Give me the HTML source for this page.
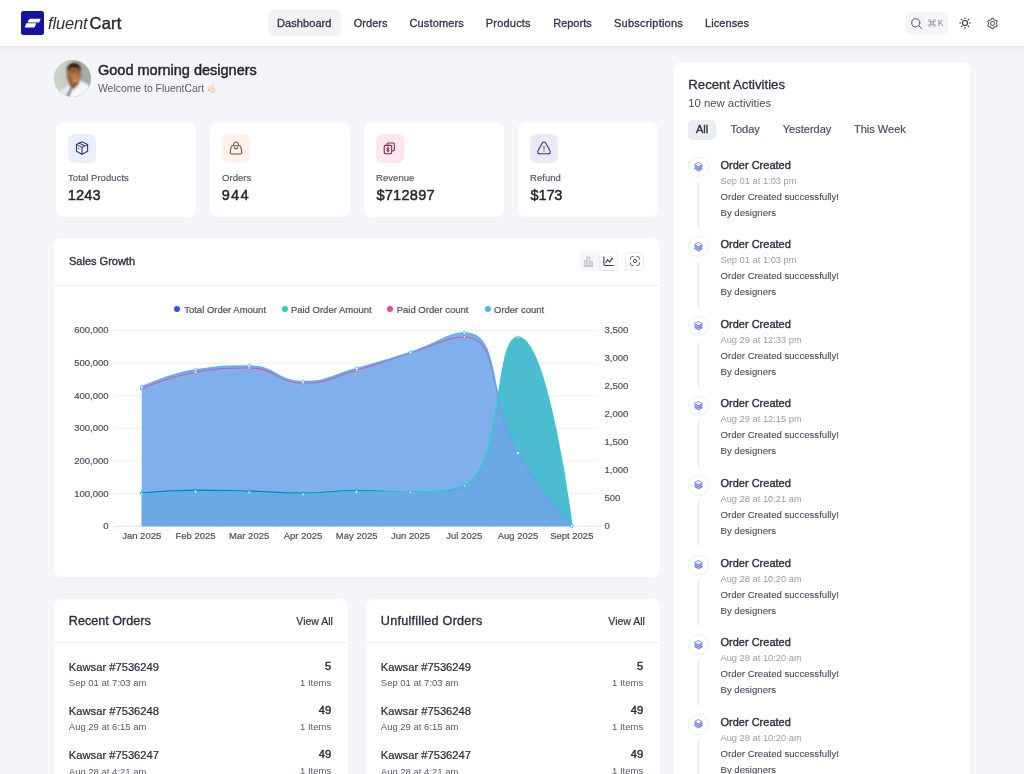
<!DOCTYPE html>
<html>
<head>
<meta charset="utf-8">
<title>FluentCart Dashboard</title>
<style>
*{box-sizing:border-box;margin:0;padding:0}
html,body{width:1024px;height:774px;overflow:hidden}
body{will-change:transform;background:#f4f5f9;font-family:"Liberation Sans",sans-serif;color:#2a2f3f;position:relative;-webkit-font-smoothing:antialiased}
.a{position:absolute;white-space:nowrap}
.m{-webkit-text-stroke:0.3px currentColor}
.sb{-webkit-text-stroke:0.45px currentColor}
.card{position:absolute;background:#fff;border-radius:7px}
/* header */
#hdr{position:absolute;left:0;top:0;width:1024px;height:45.600px;background:#fff;box-shadow:0 1px 2px rgba(20,25,50,.05),0 3px 10px rgba(20,25,50,.035)}
.nav{font-size:11px;line-height:14px;top:16px;color:#2f3446}
.cl{font-size:9.500px;line-height:12px;color:#4b515f;-webkit-text-stroke:0.200px currentColor}
.tab{font-size:11px;line-height:14px;top:122px;color:#474d5b;-webkit-text-stroke:0.180px currentColor}
</style>
</head>
<body>
<!--HEADER-->
<div id="hdr">
  <div class="a" style="left:21px;top:11.3px;width:23.2px;height:23.4px;background:#1414a2;border-radius:2.5px"></div>
  <svg class="a" style="left:21px;top:11px" width="24" height="24" viewBox="0 0 24 24"><path d="M9.600 7.700h9.600c0.300 0 0.500 0.200 0.400 0.500l-1.300 3c-0.100 0.200-0.300 0.300-0.500 0.300H6.700c0.300-2.100 1.300-3.500 2.900-3.800z M5.700 12.300h9c0.300 0 0.500 0.200 0.400 0.500l-1.400 3.300c-0.100 0.200-0.300 0.300-0.500 0.300H4.200c-0.300 0-0.500-0.200-0.400-0.500l1.400-3.300c0.100-0.200 0.300-0.300 0.500-0.300z" fill="#fff"/></svg>
  <div class="a" style="left:48px;top:12.5px;font-size:16.5px;line-height:20px;color:#34343e"><i style="letter-spacing:-0.15px">fluent</i><span class="sb" style="margin-left:2px;letter-spacing:0.25px;color:#2a2a36">Cart</span></div>
  <div class="a" style="left:268px;top:10px;width:73px;height:26px;background:#f1f2f4;border-radius:6px"></div>
  <div class="a nav m" style="left:277px;letter-spacing:0.08px">Dashboard</div>
  <div class="a nav m" style="left:353.8px">Orders</div>
  <div class="a nav m" style="left:409.5px;letter-spacing:0.13px">Customers</div>
  <div class="a nav m" style="left:485.8px;letter-spacing:0.2px">Products</div>
  <div class="a nav m" style="left:553.2px">Reports</div>
  <div class="a nav m" style="left:614px;letter-spacing:0.23px">Subscriptions</div>
  <div class="a nav m" style="left:705px;letter-spacing:0.07px">Licenses</div>
  <div class="a" style="left:905.800px;top:11.500px;width:42.400px;height:23px;background:#f3f5f7;border-radius:6px"></div>
  <svg class="a" style="left:909.500px;top:17px" width="14" height="14" viewBox="0 0 14 14" fill="none" stroke="#555b66" stroke-width="1" stroke-linecap="round"><circle cx="5.800" cy="5.800" r="4.100"/><path d="M8.900 8.900L11.800 11.600"/></svg>
  <div class="a" style="left:928.200px;top:17.800px;font-size:8.600px;line-height:11px;color:#9a9fa9;-webkit-text-stroke:0.250px #9a9fa9"><svg width="8" height="8" viewBox="0 0 8 8" style="vertical-align:-0.900px;margin-right:1.500px" fill="none" stroke="#9a9fa9" stroke-width="0.950"><path d="M2.750 2.750h2.500v2.500h-2.500zM2.750 2.750h-1.100a1.100 1.100 0 1 1 1.100-1.100zM5.250 2.750v-1.100a1.100 1.100 0 1 1 1.100 1.100zM5.250 5.250h1.100a1.100 1.100 0 1 1-1.100 1.100zM2.750 5.250v1.100a1.100 1.100 0 1 1-1.100-1.100z"/></svg>K</div>
  <svg class="a" style="left:958.500px;top:17.100px" width="12" height="12" viewBox="0 0 12 12" fill="none" stroke="#30353f" stroke-width="1.100" stroke-linecap="round"><circle cx="6" cy="6" r="2.550"/><path d="M6 0.800v0.800M6 10.400v0.800M0.800 6h0.800M10.400 6h0.800M2.300 2.300l0.550 0.550M9.150 9.150l0.550 0.550M9.700 2.300l-0.550 0.550M2.850 9.150l-0.550 0.550"/></svg>
  <svg class="a" style="left:985.600px;top:16.700px" width="13" height="13" viewBox="0 0 13 13" fill="none" stroke="#4a505c" stroke-width="1.050" stroke-linejoin="round"><path d="M10.43 6.50L10.50 6.85L10.68 7.24L10.89 7.68L11.07 8.16L11.11 8.65L10.98 9.08L10.67 9.42L10.22 9.62L9.72 9.72L9.23 9.75L8.80 9.79L8.46 9.90L8.20 10.14L7.95 10.48L7.68 10.89L7.34 11.29L6.94 11.57L6.50 11.67L6.06 11.57L5.66 11.29L5.32 10.89L5.05 10.48L4.80 10.14L4.54 9.90L4.20 9.79L3.77 9.75L3.28 9.72L2.78 9.62L2.33 9.42L2.02 9.09L1.89 8.65L1.93 8.16L2.11 7.68L2.32 7.24L2.50 6.85L2.57 6.50L2.50 6.15L2.32 5.76L2.11 5.32L1.93 4.84L1.89 4.35L2.02 3.91L2.33 3.58L2.78 3.38L3.28 3.28L3.77 3.25L4.20 3.21L4.53 3.10L4.80 2.86L5.05 2.52L5.32 2.11L5.66 1.71L6.06 1.43L6.50 1.33L6.94 1.43L7.34 1.71L7.68 2.11L7.95 2.52L8.20 2.86L8.46 3.10L8.80 3.21L9.23 3.25L9.72 3.28L10.22 3.38L10.67 3.58L10.98 3.92L11.11 4.35L11.07 4.84L10.89 5.32L10.68 5.76L10.50 6.15Z"/><circle cx="6.500" cy="6.500" r="1.950"/></svg>
</div>
<!--GREETING-->
<div class="a" style="left:53.900px;top:60px;width:37.300px;height:37.300px;border-radius:50%;overflow:hidden;background:#c3cbc4">
<svg width="37.300" height="37.300" viewBox="0 0 37.300 37.300">
<defs><linearGradient id="avbg" x1="0" y1="0" x2="1" y2="0"><stop offset="0" stop-color="#ccd3cb"/><stop offset="0.420" stop-color="#c4ccc3"/><stop offset="0.680" stop-color="#9fa9a0"/><stop offset="1" stop-color="#a7b1a9"/></linearGradient>
<filter id="avb" x="-10%" y="-10%" width="120%" height="120%"><feGaussianBlur stdDeviation="0.900"/></filter></defs>
<rect width="37.300" height="37.300" fill="url(#avbg)"/>
<g filter="url(#avb)">
<path d="M3 38c0.500-5 3-8 7-9.500l5.500-4 4.500 3.500 6-7.500c3.500 1.500 8.500 3.500 10 7.500l2 10z" fill="#f4f6f9"/>
<path d="M-2 40l6-8 8-4 3 12z" fill="#e4e9ee"/>
<path d="M15 22l1 5 3.500 2.500 6-6-1-5z" fill="#8a5434"/>
<ellipse cx="19.700" cy="14.800" rx="6.900" ry="9.800" fill="#945a36"/>
<ellipse cx="21.500" cy="17.500" rx="3.800" ry="5" fill="#c0824f" opacity="0.800"/>
<path d="M12.800 12c-0.300-5.500 2.500-9 7-9s7.500 3.300 7 9c-0.800-3.300-3-5.200-7-5.200s-6 1.800-7 5.200z" fill="#24140c"/><path d="M13.300 11c0.500-4.500 3-7 6.500-7s6.300 2.500 6.500 7c-1.200-2.500-3.200-3.800-6.500-3.800s-5.300 1.300-6.500 3.800z" fill="#2a170e"/>
<path d="M17.500 19.800c2 1.300 4.500 1.100 6-0.300-0.500 1.700-1.800 2.500-3.200 2.500s-2.500-0.800-2.800-2.200z" fill="#d9a27a"/><ellipse cx="16.300" cy="14.500" rx="1.600" ry="3" fill="#b97a4c" opacity="0.700"/>
<path d="M16 28l2.300 0.800-3.200 8-2.800-0.500z" fill="#4f627a"/>
</g>
</svg></div>
<div class="a sb" style="left:98px;top:60.500px;font-size:14.500px;line-height:18px;color:#22262f">Good morning designers</div>
<div class="a" style="left:98px;top:81.500px;font-size:10.400px;line-height:13px;color:#5a606c">Welcome to FluentCart <span style="display:inline-block;width:10px;height:11px;vertical-align:-2px;margin-left:0.500px"><svg width="10" height="11" viewBox="0 0 10 11"><defs><filter id="emb"><feGaussianBlur stdDeviation="0.450"/></filter></defs><g filter="url(#emb)"><path d="M1.300 3h3l1.200-1.800 1.200 2.500 1.800 3.300-1 3H4L1 7.500z" fill="#f2e4d0"/><path d="M4.500 4.500l3 0.500 0.800 3-1.300 2.300H4.800z" fill="#fbd9b3"/><path d="M1 6.800l1.800 0.800" stroke="#c9c0ad" stroke-width="1.200"/><path d="M5.500 1.200l0.800 1.500" stroke="#bdb8ad" stroke-width="0.800"/></g></svg></span></div>
<!--STATS-->
<div class="card" style="left:56px;top:122px;width:139.600px;height:94.600px;border-radius:8px">
  <div class="a" style="left:11.600px;top:12.200px;width:28.800px;height:28.800px;border-radius:6.500px;background:#ebeefc"><svg class="a" style="left:7.300px;top:7.200px" width="14" height="14" viewBox="0 0 14 14" fill="none" stroke="#2e3672" stroke-width="1.050" stroke-linejoin="round" stroke-linecap="round"><path d="M7 0.800L12.600 3.400V10.300L7 13.200 1.400 10.300V3.400z"/><path d="M1.400 3.600L7 6.400 12.600 3.600M7 6.400V13.200M4 2.100L9.800 5"/><path d="M3 7.200l1 0.500" stroke-width="0.900"/></svg></div>
  <div class="a" style="left:12px;top:49.600px;font-size:9.500px;line-height:12px;color:#4d5361;letter-spacing:0.050px;-webkit-text-stroke:0.150px currentColor">Total Products</div>
  <div class="a sb" style="left:11.7px;top:63.600px;font-size:14.600px;line-height:18px;color:#22262f;letter-spacing:0.15px">1243</div>
</div>
<div class="card" style="left:210px;top:122px;width:139.600px;height:94.600px;border-radius:8px">
  <div class="a" style="left:11.600px;top:12.200px;width:28.800px;height:28.800px;border-radius:6.500px;background:#fef1ea"><svg class="a" style="left:7.300px;top:7.300px" width="14" height="14" viewBox="0 0 14 14" fill="none" stroke="#6a5147" stroke-width="1.050" stroke-linejoin="round" stroke-linecap="round"><path d="M3.500 4.800h7c0.700 0 1.200 0.400 1.350 1.100l0.950 5.200c0.200 1-0.400 1.800-1.400 1.800H2.600c-1 0-1.600-0.800-1.400-1.800l0.950-5.200c0.150-0.700 0.650-1.100 1.350-1.100z"/><path d="M4.600 4.800V3.600c0-1.500 1-2.600 2.400-2.600s2.400 1.100 2.400 2.600v1.200"/><path d="M5.300 6.500c0.300 0.900 0.900 1.400 1.700 1.400s1.400-0.500 1.700-1.400"/></svg></div>
  <div class="a" style="left:12px;top:49.600px;font-size:9.500px;line-height:12px;color:#4d5361;letter-spacing:0.050px;-webkit-text-stroke:0.150px currentColor">Orders</div>
  <div class="a sb" style="left:11.7px;top:63.600px;font-size:14.600px;line-height:18px;color:#22262f;letter-spacing:1.3px">944</div>
</div>
<div class="card" style="left:364px;top:122px;width:139.600px;height:94.600px;border-radius:8px">
  <div class="a" style="left:11.600px;top:12.200px;width:28.800px;height:28.800px;border-radius:6.500px;background:#fde6ee"><svg class="a" style="left:7.600px;top:7.600px" width="13" height="13" viewBox="0 0 13 13" fill="none" stroke="#84224f" stroke-width="1.050" stroke-linejoin="round" stroke-linecap="round"><rect x="1.200" y="3.350" width="7.500" height="8.300" rx="1.100"/><path d="M4.050 3.200V2.100c0-0.700 0.400-1.100 1.100-1.100h5.100c0.700 0 1.100 0.400 1.100 1.100v5.600c0 0.700-0.400 1.100-1.100 1.100H8.900"/><path d="M6.100 6.400c-0.250-0.450-0.650-0.650-1.200-0.650-0.700 0-1.150 0.350-1.150 0.850s0.450 0.750 1.200 0.900 1.250 0.450 1.250 0.950-0.500 0.850-1.250 0.850c-0.600 0-1.050-0.250-1.300-0.700M4.950 5.100v4.800" stroke-width="0.850"/></svg></div>
  <div class="a" style="left:12px;top:49.600px;font-size:9.500px;line-height:12px;color:#4d5361;letter-spacing:0.050px;-webkit-text-stroke:0.150px currentColor">Revenue</div>
  <div class="a sb" style="left:12.4px;top:63.600px;font-size:14.600px;line-height:18px;color:#22262f;letter-spacing:0.25px">$712897</div>
</div>
<div class="card" style="left:518px;top:122px;width:139.600px;height:94.600px;border-radius:8px">
  <div class="a" style="left:11.600px;top:12.200px;width:28.800px;height:28.800px;border-radius:6.500px;background:#ece8fc"><svg class="a" style="left:6.600px;top:7.200px" width="16" height="15" viewBox="0 0 16 15" fill="none" stroke="#443a66" stroke-width="1.100" stroke-linejoin="round" stroke-linecap="round"><path d="M6.200 2c0.800-1.400 2.800-1.400 3.600 0l4.200 7.900c0.800 1.400-0.100 2.900-1.700 2.900H3.700c-1.600 0-2.500-1.500-1.700-2.900z"/><path d="M8 5.200v3M8 10v0.300" stroke="#5a5184" stroke-width="1.100"/></svg></div>
  <div class="a" style="left:12px;top:49.600px;font-size:9.500px;line-height:12px;color:#4d5361;letter-spacing:0.050px;-webkit-text-stroke:0.150px currentColor">Refund</div>
  <div class="a sb" style="left:12.6px;top:63.600px;font-size:14.600px;line-height:18px;color:#22262f;letter-spacing:-0.2px">$173</div>
</div>
<!--CHART-->
<div class="card" style="left:54px;top:238px;width:606px;height:339px;border-radius:8px"></div>
<div class="a" style="left:54px;top:285px;width:606px;height:1px;background:#eff0f3"></div>
<div class="a sb" style="left:69px;top:254px;font-size:11px;line-height:14px;color:#2a2f3f;-webkit-text-stroke-width:0.350px">Sales Growth</div>
<div class="a" style="left:579.500px;top:251.300px;width:38px;height:19.500px;border-radius:4px;background:#f5f6f8"></div>
<div class="a" style="left:600px;top:252.300px;width:16.800px;height:17.500px;border-radius:3.500px;background:#fff;box-shadow:0 1px 2px rgba(20,25,50,.10)"></div>
<svg class="a" style="left:582.500px;top:256px" width="11" height="11" viewBox="0 0 11 11" fill="#e1e3e6" stroke="#bcbfc5" stroke-width="0.750" stroke-linejoin="round"><path d="M1.300 4.500h2.400v5.500H1.300zM3.900 1h3v9h-3zM7.100 5.800h2.400v4.200H7.100z"/><path d="M0.500 10.200h10" fill="none"/></svg>
<svg class="a" style="left:603px;top:255.500px" width="11" height="11" viewBox="0 0 11 11" fill="none" stroke="#343945" stroke-width="1.050" stroke-linejoin="round" stroke-linecap="round"><path d="M0.900 0.800v7.500c0 0.800 0.400 1.200 1.200 1.200h8.200"/><path d="M2.700 6.800l2-3.200 2 2.600 2.200-3.800"/><path d="M8.900 2.200l0.300 0.800" stroke-width="1.300"/></svg>
<div class="a" style="left:625px;top:251.500px;width:19.300px;height:19.300px;border-radius:4.500px;background:#fff;border:1px solid #ebecef"></div>
<svg class="a" style="left:629.600px;top:256.300px" width="10" height="10" viewBox="0 0 10 10" fill="none" stroke="#4d535f" stroke-width="1" stroke-linecap="round"><path d="M0.600 3.200V2.200c0-1 0.600-1.600 1.600-1.600h1M6.800 0.600h1c1 0 1.600 0.600 1.600 1.600v1M9.400 6.800v1c0 1-0.600 1.600-1.600 1.600h-1M3.200 9.400h-1c-1 0-1.600-0.600-1.600-1.600v-1"/><circle cx="5" cy="5" r="1.700"/></svg>
<svg class="a" style="left:0;top:0" width="1024" height="774" viewBox="0 0 1024 774">
<path d="M114.500 526.2H598.300" stroke="#e1e3e7" stroke-width="1"/>
<path d="M114.500 493.6H598.300" stroke="#e3e5e9" stroke-width="1" stroke-dasharray="2.500 1.500"/>
<path d="M114.500 460.9H598.300" stroke="#e3e5e9" stroke-width="1" stroke-dasharray="2.500 1.500"/>
<path d="M114.500 428.3H598.300" stroke="#e3e5e9" stroke-width="1" stroke-dasharray="2.500 1.500"/>
<path d="M114.500 395.7H598.300" stroke="#e3e5e9" stroke-width="1" stroke-dasharray="2.500 1.500"/>
<path d="M114.500 363.1H598.300" stroke="#e3e5e9" stroke-width="1" stroke-dasharray="2.500 1.500"/>
<path d="M114.500 330.4H598.300" stroke="#e3e5e9" stroke-width="1" stroke-dasharray="2.500 1.500"/>
<path d="M114.5 526.200V529.500" stroke="#e4e6ea" stroke-width="1"/>
<path d="M168.3 526.200V529.500" stroke="#e4e6ea" stroke-width="1"/>
<path d="M222.0 526.200V529.500" stroke="#e4e6ea" stroke-width="1"/>
<path d="M275.8 526.200V529.500" stroke="#e4e6ea" stroke-width="1"/>
<path d="M329.5 526.200V529.500" stroke="#e4e6ea" stroke-width="1"/>
<path d="M383.3 526.200V529.500" stroke="#e4e6ea" stroke-width="1"/>
<path d="M437.1 526.200V529.500" stroke="#e4e6ea" stroke-width="1"/>
<path d="M490.8 526.200V529.500" stroke="#e4e6ea" stroke-width="1"/>
<path d="M544.6 526.200V529.500" stroke="#e4e6ea" stroke-width="1"/>
<path d="M598.3 526.200V529.500" stroke="#e4e6ea" stroke-width="1"/>
<defs><clipPath id="clipA"><path d="M141.7 387.0C141.7 387.0 168.0 374.2 195.5 370.0C221.7 366.0 222.8 366.0 249.2 366.0C276.6 366.0 275.9 381.6 303.0 381.6C329.7 381.6 330.0 375.7 356.7 368.5C383.8 361.1 383.9 361.2 410.5 352.4C437.6 343.4 448.0 333.0 464.3 333.0C501.7 333.0 486.2 395.9 518.0 453.0C540.0 492.5 571.8 526.2 571.8 526.2L571.8 526.2L141.7 526.2Z"/></clipPath></defs>
<path d="M141.7 494.3C141.7 494.3 168.6 491.8 195.5 491.8C222.3 491.8 222.3 491.9 249.2 492.6C276.1 493.3 276.1 494.5 303.0 494.5C329.9 494.5 329.8 492.0 356.7 492.0C383.6 492.0 383.7 492.2 410.5 492.2C437.5 492.2 450.6 492.2 464.3 486.0C504.3 467.9 494.0 337.3 518.0 337.3C547.8 337.3 571.8 526.2 571.8 526.2L571.8 526.2L141.7 526.2Z" fill="#4cbdd0"/>
<path d="M141.7 387.0C141.7 387.0 168.0 374.2 195.5 370.0C221.7 366.0 222.8 366.0 249.2 366.0C276.6 366.0 275.9 381.6 303.0 381.6C329.7 381.6 330.0 375.7 356.7 368.5C383.8 361.1 383.9 361.2 410.5 352.4C437.6 343.4 448.0 333.0 464.3 333.0C501.7 333.0 486.2 395.9 518.0 453.0C540.0 492.5 571.8 526.2 571.8 526.2L571.8 526.2L141.7 526.2Z" fill="#7fb0ec"/>
<path d="M141.7 494.3C141.7 494.3 168.6 491.8 195.5 491.8C222.3 491.8 222.3 491.9 249.2 492.6C276.1 493.3 276.1 494.5 303.0 494.5C329.9 494.5 329.8 492.0 356.7 492.0C383.6 492.0 383.7 492.2 410.5 492.2C437.5 492.2 450.6 492.2 464.3 486.0C504.3 467.9 494.0 337.3 518.0 337.3C547.8 337.3 571.8 526.2 571.8 526.2L571.8 526.2L141.7 526.2Z" fill="#6da8e6" clip-path="url(#clipA)"/>
<path d="M141.7 492.9C141.7 492.9 168.6 490.3 195.5 490.3C222.3 490.3 222.3 490.4 249.2 491.1C276.1 491.8 276.1 493.1 303.0 493.1C329.9 493.1 329.9 490.6 356.7 490.6C383.6 490.6 383.7 492.2 410.5 492.2C437.5 492.2 450.6 492.2 464.3 486.0" fill="none" stroke="#2a6ee0" stroke-width="1.400"/>
<path d="M141.7 494.3C141.7 494.3 168.6 491.8 195.5 491.8C222.3 491.8 222.3 491.9 249.2 492.6C276.1 493.3 276.1 494.5 303.0 494.5C329.9 494.5 329.8 492.0 356.7 492.0C383.6 492.0 383.7 492.2 410.5 492.2C437.5 492.2 450.6 492.2 464.3 486.0C504.3 467.9 494.0 337.3 518.0 337.3C547.8 337.3 571.8 526.2 571.8 526.2" fill="none" stroke="#38c7cd" stroke-width="1.800"/>
<path d="M141.7 388.7C141.7 388.7 168.0 376.8 195.5 372.3C221.8 368.0 222.8 368.0 249.2 368.0C276.6 368.0 276.0 383.2 303.0 383.2C329.7 383.2 330.2 377.8 356.7 370.3C383.9 362.6 383.5 361.3 410.5 352.9C437.3 344.6 447.9 337.0 464.3 337.0C501.7 337.0 486.5 398.1 518.0 453.6C540.2 492.7 571.8 526.2 571.8 526.2" fill="none" stroke="#d456b0" stroke-width="1.100"/>
<path d="M141.7 387.0C141.7 387.0 168.0 374.2 195.5 370.0C221.7 366.0 222.8 366.0 249.2 366.0C276.6 366.0 275.9 381.6 303.0 381.6C329.7 381.6 330.0 375.7 356.7 368.5C383.8 361.1 383.9 361.2 410.5 352.4C437.6 343.4 448.0 333.0 464.3 333.0C501.7 333.0 486.2 395.9 518.0 453.0C540.0 492.5 571.8 526.2 571.8 526.2" fill="none" stroke="#4db4f2" stroke-width="1.400"/>
<circle cx="141.7" cy="492.9" r="1.2" fill="#bfe3ff" stroke="#2a6ee0" stroke-width="0.8"/><circle cx="195.5" cy="490.3" r="1.2" fill="#bfe3ff" stroke="#2a6ee0" stroke-width="0.8"/><circle cx="249.2" cy="491.1" r="1.2" fill="#bfe3ff" stroke="#2a6ee0" stroke-width="0.8"/><circle cx="303.0" cy="493.1" r="1.2" fill="#bfe3ff" stroke="#2a6ee0" stroke-width="0.8"/><circle cx="356.7" cy="490.6" r="1.2" fill="#bfe3ff" stroke="#2a6ee0" stroke-width="0.8"/><circle cx="410.5" cy="492.2" r="1.2" fill="#bfe3ff" stroke="#2a6ee0" stroke-width="0.8"/><circle cx="464.3" cy="486.0" r="1.2" fill="#bfe3ff" stroke="#2a6ee0" stroke-width="0.8"/>
<circle cx="141.7" cy="494.3" r="1.2" fill="#d8fbff" stroke="#35c6cf" stroke-width="0.8"/><circle cx="195.5" cy="491.8" r="1.2" fill="#d8fbff" stroke="#35c6cf" stroke-width="0.8"/><circle cx="249.2" cy="492.6" r="1.2" fill="#d8fbff" stroke="#35c6cf" stroke-width="0.8"/><circle cx="303.0" cy="494.5" r="1.2" fill="#d8fbff" stroke="#35c6cf" stroke-width="0.8"/><circle cx="356.7" cy="492.0" r="1.2" fill="#d8fbff" stroke="#35c6cf" stroke-width="0.8"/><circle cx="410.5" cy="492.2" r="1.2" fill="#d8fbff" stroke="#35c6cf" stroke-width="0.8"/><circle cx="464.3" cy="486.0" r="1.2" fill="#d8fbff" stroke="#35c6cf" stroke-width="0.8"/><circle cx="518.0" cy="337.3" r="1.2" fill="#d8fbff" stroke="#35c6cf" stroke-width="0.8"/><circle cx="571.8" cy="526.2" r="1.2" fill="#d8fbff" stroke="#35c6cf" stroke-width="0.8"/>
<circle cx="141.7" cy="388.7" r="1.3" fill="#fff" stroke="#d456b0" stroke-width="0.8"/><circle cx="195.5" cy="372.3" r="1.3" fill="#fff" stroke="#d456b0" stroke-width="0.8"/><circle cx="249.2" cy="368.0" r="1.3" fill="#fff" stroke="#d456b0" stroke-width="0.8"/><circle cx="303.0" cy="383.2" r="1.3" fill="#fff" stroke="#d456b0" stroke-width="0.8"/><circle cx="356.7" cy="370.3" r="1.3" fill="#fff" stroke="#d456b0" stroke-width="0.8"/><circle cx="410.5" cy="352.9" r="1.3" fill="#fff" stroke="#d456b0" stroke-width="0.8"/><circle cx="464.3" cy="337.0" r="1.3" fill="#fff" stroke="#d456b0" stroke-width="0.8"/>
<circle cx="141.7" cy="387.0" r="1.5" fill="#fff" stroke="#4db4f2" stroke-width="0.9"/><circle cx="195.5" cy="370.0" r="1.5" fill="#fff" stroke="#4db4f2" stroke-width="0.9"/><circle cx="249.2" cy="366.0" r="1.5" fill="#fff" stroke="#4db4f2" stroke-width="0.9"/><circle cx="303.0" cy="381.6" r="1.5" fill="#fff" stroke="#4db4f2" stroke-width="0.9"/><circle cx="356.7" cy="368.5" r="1.5" fill="#fff" stroke="#4db4f2" stroke-width="0.9"/><circle cx="410.5" cy="352.4" r="1.5" fill="#fff" stroke="#4db4f2" stroke-width="0.9"/><circle cx="464.3" cy="333.0" r="1.5" fill="#fff" stroke="#4db4f2" stroke-width="0.9"/><circle cx="518.0" cy="453.0" r="1.5" fill="#fff" stroke="#4db4f2" stroke-width="0.9"/><circle cx="571.8" cy="526.2" r="1.5" fill="#fff" stroke="#4db4f2" stroke-width="0.9"/>
</svg>
<div class="a cl" style="right:915.5px;top:520.2px">0</div>
<div class="a cl" style="right:915.5px;top:487.6px">100,000</div>
<div class="a cl" style="right:915.5px;top:454.9px">200,000</div>
<div class="a cl" style="right:915.5px;top:422.3px">300,000</div>
<div class="a cl" style="right:915.5px;top:389.7px">400,000</div>
<div class="a cl" style="right:915.5px;top:357.1px">500,000</div>
<div class="a cl" style="right:915.5px;top:324.4px">600,000</div>
<div class="a cl" style="left:604.500px;top:520.2px">0</div>
<div class="a cl" style="left:604.500px;top:492.2px">500</div>
<div class="a cl" style="left:604.500px;top:464.3px">1,000</div>
<div class="a cl" style="left:604.500px;top:436.3px">1,500</div>
<div class="a cl" style="left:604.500px;top:408.3px">2,000</div>
<div class="a cl" style="left:604.500px;top:380.4px">2,500</div>
<div class="a cl" style="left:604.500px;top:352.4px">3,000</div>
<div class="a cl" style="left:604.500px;top:324.4px">3,500</div>
<div class="a cl" style="left:101.7px;width:80px;text-align:center;top:530.200px">Jan 2025</div>
<div class="a cl" style="left:155.5px;width:80px;text-align:center;top:530.200px">Feb 2025</div>
<div class="a cl" style="left:209.2px;width:80px;text-align:center;top:530.200px">Mar 2025</div>
<div class="a cl" style="left:263.0px;width:80px;text-align:center;top:530.200px">Apr 2025</div>
<div class="a cl" style="left:316.7px;width:80px;text-align:center;top:530.200px">May 2025</div>
<div class="a cl" style="left:370.5px;width:80px;text-align:center;top:530.200px">Jun 2025</div>
<div class="a cl" style="left:424.3px;width:80px;text-align:center;top:530.200px">Jul 2025</div>
<div class="a cl" style="left:478.0px;width:80px;text-align:center;top:530.200px">Aug 2025</div>
<div class="a cl" style="left:531.8px;width:80px;text-align:center;top:530.200px">Sept 2025</div>
<div class="a" style="left:174.0px;top:306.400px;width:6px;height:6px;border-radius:50%;background:#3550e2"></div><div class="a cl" style="left:184.2px;top:303.500px">Total Order Amount</div>
<div class="a" style="left:281.8px;top:306.400px;width:6px;height:6px;border-radius:50%;background:#2fcfb2"></div><div class="a cl" style="left:290.9px;top:303.500px">Paid Order Amount</div>
<div class="a" style="left:387.3px;top:306.400px;width:6px;height:6px;border-radius:50%;background:#ea4a9c"></div><div class="a cl" style="left:396.7px;top:303.500px">Paid Order count</div>
<div class="a" style="left:484.9px;top:306.400px;width:6px;height:6px;border-radius:50%;background:#4bb7f0"></div><div class="a cl" style="left:494px;top:303.500px">Order count</div>
<!--/CHART-->
<!--ORDERS-->
<div class="card" style="left:54px;top:598.500px;width:294px;height:190px;border-radius:8px">
  <div class="a sb" style="left:14.800px;top:14.500px;font-size:12.600px;line-height:16px;color:#2a2f3f;-webkit-text-stroke-width:0.350px">Recent Orders</div>
  <div class="a" style="right:15.100px;top:16.100px;font-size:10.500px;line-height:13px;color:#2f3446;-webkit-text-stroke:0.220px currentColor">View All</div>
  <div class="a" style="left:0;top:43.500px;width:294px;height:1px;background:#eff0f3"></div>
  <div class="a" style="left:14.800px;top:61.0px;font-size:11.200px;line-height:14px;color:#272c3b;-webkit-text-stroke:0.220px currentColor">Kawsar #7536249</div>
  <div class="a" style="left:14.800px;top:78.5px;font-size:9.500px;line-height:12px;color:#555b69">Sep 01 at 7:03 am</div>
  <div class="a sb" style="right:16.800px;top:60.0px;font-size:11.200px;line-height:14px;color:#2c3142">5</div>
  <div class="a" style="right:16.800px;top:78.0px;font-size:9.500px;line-height:12px;color:#555b69">1 Items</div>
  <div class="a" style="left:14.800px;top:105.3px;font-size:11.200px;line-height:14px;color:#272c3b;-webkit-text-stroke:0.220px currentColor">Kawsar #7536248</div>
  <div class="a" style="left:14.800px;top:122.8px;font-size:9.500px;line-height:12px;color:#555b69">Aug 29 at 6:15 am</div>
  <div class="a sb" style="right:16.800px;top:104.3px;font-size:11.200px;line-height:14px;color:#2c3142">49</div>
  <div class="a" style="right:16.800px;top:122.3px;font-size:9.500px;line-height:12px;color:#555b69">1 Items</div>
  <div class="a" style="left:14.800px;top:149.6px;font-size:11.200px;line-height:14px;color:#272c3b;-webkit-text-stroke:0.220px currentColor">Kawsar #7536247</div>
  <div class="a" style="left:14.800px;top:167.1px;font-size:9.500px;line-height:12px;color:#555b69">Aug 28 at 4:21 am</div>
  <div class="a sb" style="right:16.800px;top:148.6px;font-size:11.200px;line-height:14px;color:#2c3142">49</div>
  <div class="a" style="right:16.800px;top:166.6px;font-size:9.500px;line-height:12px;color:#555b69">1 Items</div>
</div>
<div class="card" style="left:366px;top:598.500px;width:294px;height:190px;border-radius:8px">
  <div class="a sb" style="left:14.800px;top:14.500px;font-size:12.600px;line-height:16px;color:#2a2f3f;-webkit-text-stroke-width:0.350px;letter-spacing:0.250px">Unfulfilled Orders</div>
  <div class="a" style="right:15.100px;top:16.100px;font-size:10.500px;line-height:13px;color:#2f3446;-webkit-text-stroke:0.220px currentColor">View All</div>
  <div class="a" style="left:0;top:43.500px;width:294px;height:1px;background:#eff0f3"></div>
  <div class="a" style="left:14.800px;top:61.0px;font-size:11.200px;line-height:14px;color:#272c3b;-webkit-text-stroke:0.220px currentColor">Kawsar #7536249</div>
  <div class="a" style="left:14.800px;top:78.5px;font-size:9.500px;line-height:12px;color:#555b69">Sep 01 at 7:03 am</div>
  <div class="a sb" style="right:16.800px;top:60.0px;font-size:11.200px;line-height:14px;color:#2c3142">5</div>
  <div class="a" style="right:16.800px;top:78.0px;font-size:9.500px;line-height:12px;color:#555b69">1 Items</div>
  <div class="a" style="left:14.800px;top:105.3px;font-size:11.200px;line-height:14px;color:#272c3b;-webkit-text-stroke:0.220px currentColor">Kawsar #7536248</div>
  <div class="a" style="left:14.800px;top:122.8px;font-size:9.500px;line-height:12px;color:#555b69">Aug 29 at 6:15 am</div>
  <div class="a sb" style="right:16.800px;top:104.3px;font-size:11.200px;line-height:14px;color:#2c3142">49</div>
  <div class="a" style="right:16.800px;top:122.3px;font-size:9.500px;line-height:12px;color:#555b69">1 Items</div>
  <div class="a" style="left:14.800px;top:149.6px;font-size:11.200px;line-height:14px;color:#272c3b;-webkit-text-stroke:0.220px currentColor">Kawsar #7536247</div>
  <div class="a" style="left:14.800px;top:167.1px;font-size:9.500px;line-height:12px;color:#555b69">Aug 28 at 4:21 am</div>
  <div class="a sb" style="right:16.800px;top:148.6px;font-size:11.200px;line-height:14px;color:#2c3142">49</div>
  <div class="a" style="right:16.800px;top:166.6px;font-size:9.500px;line-height:12px;color:#555b69">1 Items</div>
</div>
<!--ACTIVITIES-->
<div class="card" style="left:674px;top:61.500px;width:295.500px;height:730px;border-radius:8px"></div>
<div class="a sb" style="left:688.300px;top:76.500px;font-size:13.200px;line-height:16px;color:#2a2f3f;-webkit-text-stroke-width:0.300px">Recent Activities</div>
<div class="a" style="left:688.300px;top:96.500px;font-size:11.300px;line-height:13px;color:#474d5b">10 new activities</div>
<div class="a" style="left:688.300px;top:120px;width:28px;height:20px;border-radius:5px;background:#ebedf0"></div>
<div class="a tab sb" style="left:696px;color:#2a2f3f;-webkit-text-stroke-width:0.350px">All</div>
<div class="a tab" style="left:730.500px">Today</div>
<div class="a tab" style="left:782.800px">Yesterday</div>
<div class="a tab" style="left:854px">This Week</div>
<div class="a" style="left:697.600px;top:182.4px;width:1px;height:45.700px;background:#e6e8eb"></div>
<div class="a" style="left:688.200px;top:156.7px;width:20.600px;height:20.600px;border-radius:50%;background:#fff;border:1px solid #eceef1"></div>
<svg class="a" style="left:694.100px;top:162.0px" width="9.200" height="10.100" viewBox="0 0 10 11" stroke="#5860e0" stroke-width="0.850" stroke-linejoin="round" stroke-linecap="round"><path d="M0.900 7.400L5 9.700 9.100 7.400 5 5.100z" fill="#b3b8f8"/><path d="M0.900 5.200L5 7.500 9.100 5.200 5 2.900z" fill="#b3b8f8"/><path d="M5 0.700L9.100 3 5 5.300 0.900 3z" fill="#fff"/></svg>
<div class="a sb" style="left:720.500px;top:158.0px;font-size:11px;line-height:14px;color:#2a2f3f;-webkit-text-stroke-width:0.350px">Order Created</div>
<div class="a" style="left:720.500px;top:175.0px;font-size:9.300px;line-height:12px;color:#989da8">Sep 01 at 1:03 pm</div>
<div class="a" style="left:720.500px;top:191.0px;font-size:9.600px;line-height:12px;color:#484e5c;-webkit-text-stroke:0.100px currentColor">Order Created successfully!</div>
<div class="a" style="left:720.500px;top:207.0px;font-size:9.600px;line-height:12px;color:#484e5c;-webkit-text-stroke:0.100px currentColor">By designers</div>
<div class="a" style="left:697.600px;top:262.0px;width:1px;height:45.700px;background:#e6e8eb"></div>
<div class="a" style="left:688.200px;top:236.3px;width:20.600px;height:20.600px;border-radius:50%;background:#fff;border:1px solid #eceef1"></div>
<svg class="a" style="left:694.100px;top:241.6px" width="9.200" height="10.100" viewBox="0 0 10 11" stroke="#5860e0" stroke-width="0.850" stroke-linejoin="round" stroke-linecap="round"><path d="M0.900 7.400L5 9.700 9.100 7.400 5 5.100z" fill="#b3b8f8"/><path d="M0.900 5.200L5 7.500 9.100 5.200 5 2.900z" fill="#b3b8f8"/><path d="M5 0.700L9.100 3 5 5.300 0.900 3z" fill="#fff"/></svg>
<div class="a sb" style="left:720.500px;top:237.0px;font-size:11px;line-height:14px;color:#2a2f3f;-webkit-text-stroke-width:0.350px">Order Created</div>
<div class="a" style="left:720.500px;top:254.0px;font-size:9.300px;line-height:12px;color:#989da8">Sep 01 at 1:03 pm</div>
<div class="a" style="left:720.500px;top:270.0px;font-size:9.600px;line-height:12px;color:#484e5c;-webkit-text-stroke:0.100px currentColor">Order Created successfully!</div>
<div class="a" style="left:720.500px;top:286.0px;font-size:9.600px;line-height:12px;color:#484e5c;-webkit-text-stroke:0.100px currentColor">By designers</div>
<div class="a" style="left:697.600px;top:341.6px;width:1px;height:45.700px;background:#e6e8eb"></div>
<div class="a" style="left:688.200px;top:315.9px;width:20.600px;height:20.600px;border-radius:50%;background:#fff;border:1px solid #eceef1"></div>
<svg class="a" style="left:694.100px;top:321.2px" width="9.200" height="10.100" viewBox="0 0 10 11" stroke="#5860e0" stroke-width="0.850" stroke-linejoin="round" stroke-linecap="round"><path d="M0.900 7.400L5 9.700 9.100 7.400 5 5.100z" fill="#b3b8f8"/><path d="M0.900 5.200L5 7.500 9.100 5.200 5 2.900z" fill="#b3b8f8"/><path d="M5 0.700L9.100 3 5 5.300 0.900 3z" fill="#fff"/></svg>
<div class="a sb" style="left:720.500px;top:317.0px;font-size:11px;line-height:14px;color:#2a2f3f;-webkit-text-stroke-width:0.350px">Order Created</div>
<div class="a" style="left:720.500px;top:334.0px;font-size:9.300px;line-height:12px;color:#989da8">Aug 29 at 12:33 pm</div>
<div class="a" style="left:720.500px;top:350.0px;font-size:9.600px;line-height:12px;color:#484e5c;-webkit-text-stroke:0.100px currentColor">Order Created successfully!</div>
<div class="a" style="left:720.500px;top:366.0px;font-size:9.600px;line-height:12px;color:#484e5c;-webkit-text-stroke:0.100px currentColor">By designers</div>
<div class="a" style="left:697.600px;top:421.2px;width:1px;height:45.700px;background:#e6e8eb"></div>
<div class="a" style="left:688.200px;top:395.5px;width:20.600px;height:20.600px;border-radius:50%;background:#fff;border:1px solid #eceef1"></div>
<svg class="a" style="left:694.100px;top:400.8px" width="9.200" height="10.100" viewBox="0 0 10 11" stroke="#5860e0" stroke-width="0.850" stroke-linejoin="round" stroke-linecap="round"><path d="M0.900 7.400L5 9.700 9.100 7.400 5 5.100z" fill="#b3b8f8"/><path d="M0.900 5.200L5 7.500 9.100 5.200 5 2.900z" fill="#b3b8f8"/><path d="M5 0.700L9.100 3 5 5.300 0.900 3z" fill="#fff"/></svg>
<div class="a sb" style="left:720.500px;top:396.0px;font-size:11px;line-height:14px;color:#2a2f3f;-webkit-text-stroke-width:0.350px">Order Created</div>
<div class="a" style="left:720.500px;top:413.0px;font-size:9.300px;line-height:12px;color:#989da8">Aug 29 at 12:15 pm</div>
<div class="a" style="left:720.500px;top:429.0px;font-size:9.600px;line-height:12px;color:#484e5c;-webkit-text-stroke:0.100px currentColor">Order Created successfully!</div>
<div class="a" style="left:720.500px;top:445.0px;font-size:9.600px;line-height:12px;color:#484e5c;-webkit-text-stroke:0.100px currentColor">By designers</div>
<div class="a" style="left:697.600px;top:500.8px;width:1px;height:45.700px;background:#e6e8eb"></div>
<div class="a" style="left:688.200px;top:475.1px;width:20.600px;height:20.600px;border-radius:50%;background:#fff;border:1px solid #eceef1"></div>
<svg class="a" style="left:694.100px;top:480.4px" width="9.200" height="10.100" viewBox="0 0 10 11" stroke="#5860e0" stroke-width="0.850" stroke-linejoin="round" stroke-linecap="round"><path d="M0.900 7.400L5 9.700 9.100 7.400 5 5.100z" fill="#b3b8f8"/><path d="M0.900 5.200L5 7.500 9.100 5.200 5 2.900z" fill="#b3b8f8"/><path d="M5 0.700L9.100 3 5 5.300 0.900 3z" fill="#fff"/></svg>
<div class="a sb" style="left:720.500px;top:476.0px;font-size:11px;line-height:14px;color:#2a2f3f;-webkit-text-stroke-width:0.350px">Order Created</div>
<div class="a" style="left:720.500px;top:493.0px;font-size:9.300px;line-height:12px;color:#989da8">Aug 28 at 10:21 am</div>
<div class="a" style="left:720.500px;top:509.0px;font-size:9.600px;line-height:12px;color:#484e5c;-webkit-text-stroke:0.100px currentColor">Order Created successfully!</div>
<div class="a" style="left:720.500px;top:525.0px;font-size:9.600px;line-height:12px;color:#484e5c;-webkit-text-stroke:0.100px currentColor">By designers</div>
<div class="a" style="left:697.600px;top:580.4px;width:1px;height:45.700px;background:#e6e8eb"></div>
<div class="a" style="left:688.200px;top:554.8px;width:20.600px;height:20.600px;border-radius:50%;background:#fff;border:1px solid #eceef1"></div>
<svg class="a" style="left:694.100px;top:560.0px" width="9.200" height="10.100" viewBox="0 0 10 11" stroke="#5860e0" stroke-width="0.850" stroke-linejoin="round" stroke-linecap="round"><path d="M0.900 7.400L5 9.700 9.100 7.400 5 5.100z" fill="#b3b8f8"/><path d="M0.900 5.200L5 7.500 9.100 5.200 5 2.900z" fill="#b3b8f8"/><path d="M5 0.700L9.100 3 5 5.300 0.900 3z" fill="#fff"/></svg>
<div class="a sb" style="left:720.500px;top:556.0px;font-size:11px;line-height:14px;color:#2a2f3f;-webkit-text-stroke-width:0.350px">Order Created</div>
<div class="a" style="left:720.500px;top:573.0px;font-size:9.300px;line-height:12px;color:#989da8">Aug 28 at 10:20 am</div>
<div class="a" style="left:720.500px;top:589.0px;font-size:9.600px;line-height:12px;color:#484e5c;-webkit-text-stroke:0.100px currentColor">Order Created successfully!</div>
<div class="a" style="left:720.500px;top:605.0px;font-size:9.600px;line-height:12px;color:#484e5c;-webkit-text-stroke:0.100px currentColor">By designers</div>
<div class="a" style="left:697.600px;top:660.1px;width:1px;height:45.700px;background:#e6e8eb"></div>
<div class="a" style="left:688.200px;top:634.4px;width:20.600px;height:20.600px;border-radius:50%;background:#fff;border:1px solid #eceef1"></div>
<svg class="a" style="left:694.100px;top:639.7px" width="9.200" height="10.100" viewBox="0 0 10 11" stroke="#5860e0" stroke-width="0.850" stroke-linejoin="round" stroke-linecap="round"><path d="M0.900 7.400L5 9.700 9.100 7.400 5 5.100z" fill="#b3b8f8"/><path d="M0.900 5.200L5 7.500 9.100 5.200 5 2.900z" fill="#b3b8f8"/><path d="M5 0.700L9.100 3 5 5.300 0.900 3z" fill="#fff"/></svg>
<div class="a sb" style="left:720.500px;top:635.0px;font-size:11px;line-height:14px;color:#2a2f3f;-webkit-text-stroke-width:0.350px">Order Created</div>
<div class="a" style="left:720.500px;top:652.0px;font-size:9.300px;line-height:12px;color:#989da8">Aug 28 at 10:20 am</div>
<div class="a" style="left:720.500px;top:668.0px;font-size:9.600px;line-height:12px;color:#484e5c;-webkit-text-stroke:0.100px currentColor">Order Created successfully!</div>
<div class="a" style="left:720.500px;top:684.0px;font-size:9.600px;line-height:12px;color:#484e5c;-webkit-text-stroke:0.100px currentColor">By designers</div>
<div class="a" style="left:697.600px;top:739.7px;width:1px;height:45.700px;background:#e6e8eb"></div>
<div class="a" style="left:688.200px;top:714.0px;width:20.600px;height:20.600px;border-radius:50%;background:#fff;border:1px solid #eceef1"></div>
<svg class="a" style="left:694.100px;top:719.3px" width="9.200" height="10.100" viewBox="0 0 10 11" stroke="#5860e0" stroke-width="0.850" stroke-linejoin="round" stroke-linecap="round"><path d="M0.900 7.400L5 9.700 9.100 7.400 5 5.100z" fill="#b3b8f8"/><path d="M0.900 5.200L5 7.500 9.100 5.200 5 2.900z" fill="#b3b8f8"/><path d="M5 0.700L9.100 3 5 5.300 0.900 3z" fill="#fff"/></svg>
<div class="a sb" style="left:720.500px;top:715.0px;font-size:11px;line-height:14px;color:#2a2f3f;-webkit-text-stroke-width:0.350px">Order Created</div>
<div class="a" style="left:720.500px;top:732.0px;font-size:9.300px;line-height:12px;color:#989da8">Aug 28 at 10:20 am</div>
<div class="a" style="left:720.500px;top:748.0px;font-size:9.600px;line-height:12px;color:#484e5c;-webkit-text-stroke:0.100px currentColor">Order Created successfully!</div>
<div class="a" style="left:720.500px;top:764.0px;font-size:9.600px;line-height:12px;color:#484e5c;-webkit-text-stroke:0.100px currentColor">By designers</div>
</body>
</html>
